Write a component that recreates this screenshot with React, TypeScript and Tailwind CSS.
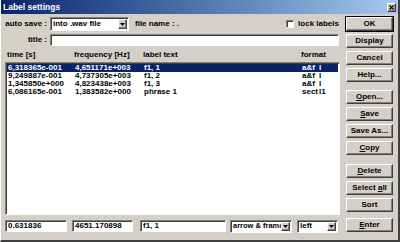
const font = { fontFamily: '"Liberation Sans", Arial, sans-serif' }

const raised =
  'border border-t-white border-l-white border-r-[#404040] border-b-[#404040] shadow-[inset_-1px_-1px_0_#808080] bg-[#d4d0c8]'
const sunken =
  'border border-t-[#808080] border-l-[#808080] border-r-white border-b-white shadow-[inset_1px_1px_0_#404040] bg-white'

function Arrow() {
  return (
    <svg width="5" height="3" viewBox="0 0 5 3">
      <path d="M0 0h5L2.5 3z" fill="#000" />
    </svg>
  )
}

function Combo({ text, className }: { text: string; className: string }) {
  return (
    <div className={`${sunken} flex items-stretch ${className}`}>
      <div className="flex-1 overflow-hidden whitespace-nowrap pl-[2px] flex items-center leading-none">{text}</div>
      <div className={`${raised} w-[9px] my-[1px] mr-[1px] flex items-center justify-center`}>
        <Arrow />
      </div>
    </div>
  )
}

function Btn({ children, def = false, className = '' }: { children: React.ReactNode; def?: boolean; className?: string }) {
  return (
    <div className={`${def ? 'outline outline-1 outline-black' : ''} ${className}`}>
      <div className={`${raised} h-[14px] w-[47px] flex items-center justify-center leading-none`}>{children}</div>
    </div>
  )
}

const rows = [
  ['6,318365e-001', '4,651171e+003', 'f1, 1', 'a&f', 'l'],
  ['9,249887e-001', '4,737305e+003', 'f1, 2', 'a&f', 'l'],
  ['1,345850e+000', '4,823438e+003', 'f1, 3', 'a&f', 'l'],
  ['6,086165e-001', '1,383582e+000', 'phrase 1', 'sect', 'l1'],
]

const cols = 'grid grid-cols-[67px_69px_158px_17px_1fr]'

export default function App() {
  return (
    <div style={font} className="w-[400px] h-[242px] bg-[#d4d0c8] text-[8px] font-bold text-black border-l border-l-white border-r-2 border-r-[#404040] border-b-2 border-b-[#404040] flex flex-col overflow-hidden">
      {/* title bar */}
      <div className="h-[14px] shrink-0 bg-gradient-to-r from-[#0a246a] to-[#a6caf0] flex items-center pl-[2px] pr-[2px]">
        <span className="text-white text-[8.5px] leading-none">Label settings</span>
        <div className="flex-1" />
        <div className={`${raised} w-[9px] h-[9px] flex items-center justify-center`}>
          <svg width="5" height="5" viewBox="0 0 5 5">
            <path d="M0.5 0.5l4 4M4.5 0.5l-4 4" stroke="#000" strokeWidth="1.2" />
          </svg>
        </div>
      </div>

      <div className="flex flex-1 pl-[4px]">
        {/* left side */}
        <div className="w-[335px] flex flex-col">
          <div className="mt-[3px] h-[14px] flex items-center">
            <span className="w-[42px] text-right whitespace-nowrap leading-none">auto save :</span>
            <Combo text="into .wav file" className="ml-[3px] w-[79px] h-[14px]" />
            <span className="ml-[6px] leading-none">file name : .</span>
            <div className="flex-1" />
            <div className={`${sunken} w-[8px] h-[8px]`} />
            <span className="ml-[4px] mr-[1px] leading-none">lock labels</span>
          </div>

          <div className="mt-[3px] h-[12px] flex items-center">
            <span className="w-[42px] text-right leading-none">title :</span>
            <div className={`${sunken} ml-[3px] h-[12px] flex-1 mr-[1px]`} />
          </div>

          <div className={`${cols} mt-[5px] h-[8px] items-center pl-[2px] leading-none`}>
            <span>time [s]</span>
            <span>frequency [Hz]</span>
            <span>label text</span>
            <span className="col-span-2">format</span>
          </div>

          <div className={`${sunken} mt-[3px] h-[153px] p-[1px]`}>
            {rows.map((r, i) => (
              <div
                key={i}
                className={`${cols} h-[8px] items-center pl-[1px] leading-[8px] ${i === 0 ? 'bg-[#0a246a] text-white' : ''}`}
              >
                {r.map((c, j) => (
                  <span key={j} className="whitespace-nowrap">{c}</span>
                ))}
              </div>
            ))}
          </div>

          <div className="mt-[5px] h-[12px] flex items-center">
            <div className={`${sunken} w-[62px] h-[12px] pl-[2px] flex items-center leading-none`}>0.631836</div>
            <div className={`${sunken} ml-[5px] w-[61px] h-[12px] pl-[2px] flex items-center leading-none`}>4651.170898</div>
            <div className={`${sunken} ml-[7px] w-[86px] h-[12px] pl-[2px] flex items-center leading-none`}>f1, 1</div>
            <Combo text="arrow & frame" className="ml-[4px] w-[62px] h-[13px] text-[7.5px]" />
            <Combo text="left" className="ml-[5px] w-[41px] h-[13px]" />
          </div>
        </div>

        {/* buttons */}
        <div className="ml-[6px] flex flex-col pt-[3px]">
          <Btn def>OK</Btn>
          <Btn className="mt-[3px]">Display</Btn>
          <Btn className="mt-[3px]">Cancel</Btn>
          <Btn className="mt-[3px]">Help...</Btn>
          <Btn className="mt-[8px]"><span><u>O</u>pen...</span></Btn>
          <Btn className="mt-[3px]"><span><u>S</u>ave</span></Btn>
          <Btn className="mt-[3px]">Save As...</Btn>
          <Btn className="mt-[3px]"><span><u>C</u>opy</span></Btn>
          <Btn className="mt-[9px]"><span><u>D</u>elete</span></Btn>
          <Btn className="mt-[3px]"><span>Select <u>a</u>ll</span></Btn>
          <Btn className="mt-[3px]">Sort</Btn>
          <Btn className="mt-[6px]"><span><u>E</u>nter</span></Btn>
        </div>
      </div>
    </div>
  )
}
